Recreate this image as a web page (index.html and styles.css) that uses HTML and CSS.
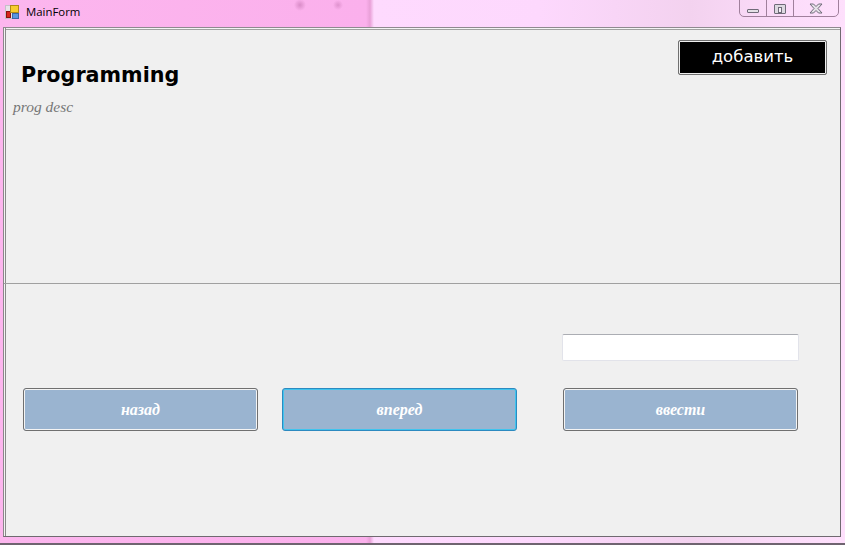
FILE: index.html
```html
<!DOCTYPE html>
<html>
    <head>
        <meta charset="utf-8">
        <title>MainForm</title>
        <link rel="stylesheet" href="styles.css">
    </head>
    <body>
        <div class="window">
            <div class="titlebar">
                <svg class="app_icon" width="14" height="14" viewBox="0 0 14 14">
                    <rect x="0.5" y="0.5" width="13" height="13" fill="#e8e4e8" stroke="#c4c0c8"/>
                    <rect x="1.5" y="6.5" width="4" height="6" fill="#d8261c" stroke="#8a1410"/>
                    <rect x="5.5" y="0.5" width="8" height="7" fill="#f8cc30" stroke="#b08a18"/>
                    <rect x="7.5" y="8.5" width="6" height="5" fill="#5a96e0" stroke="#3a66a8"/>
                </svg>
                <span class="app_title">MainForm</span>
                <div class="win_buttons">
                    <div class="win_btn min"><div class="min_icon"></div></div>
                    <div class="win_btn max"><div class="max_icon"></div></div>
                    <div class="win_btn close">
                        <svg width="14" height="11" viewBox="0 0 14 11">
                            <path d="M1 1h3.500L7 3.500 9.500 1H13L9 5.500 13 10H9.500L7 7.500 4.500 10H1L5 5.500z" fill="#e6e2e8" stroke="#6f6a78"/>
                        </svg>
                    </div>
                </div>
            </div>

            <div class="form">
                <div class="top_panel">
                    <div class="heading">
                        <div class="prog_title">Programming</div>
                        <div class="prog_desc">prog desc</div>
                    </div>
                    <div class="add_btn">добавить</div>
                </div>

                <div class="bottom_panel">
                    <div class="input_row">
                        <div class="text_input"></div>
                    </div>
                    <div class="button_row">
                        <div class="nav_btn back">назад</div>
                        <div class="nav_btn next">вперед</div>
                        <div class="nav_btn enter">ввести</div>
                    </div>
                </div>
            </div>
        </div>
    </body>
</html>
```

FILE: styles.css
```css
*{
    box-sizing: border-box;
}

html,
body{
    margin: 0;
    height: 100%;
    overflow: hidden;
}

.window{
    width: 845px;
    height: 545px;
    display: flex;
    flex-direction: column;
    background:
        radial-gradient(circle at 300px 5px, rgba(190, 110, 170, 0.55) 0, rgba(190, 110, 170, 0) 6px),
        radial-gradient(circle at 338px 5px, rgba(190, 110, 170, 0.45) 0, rgba(190, 110, 170, 0) 5px),
        linear-gradient(90deg, #fcb6ee 0, #fbb0ec 366px, #e9a0d8 370px, #fedafe 374px, #fdd8fd 540px, #f3d2ef 690px, #fcdcfa 790px, #fee0fc 845px);
    border-bottom: 2px solid #6f6470;
}

.titlebar{
    height: 26px;
    flex: none;
    display: flex;
    align-items: flex-start;
    padding-left: 5px;
    position: relative;
}

.app_icon{
    margin-top: 5px;
}

.app_title{
    margin-left: 7px;
    margin-top: 4px;
    font-family: "Open Sans", "Noto Sans", sans-serif;
    font-size: 11.400px;
    line-height: 16px;
    color: #000;
}

.win_buttons{
    position: absolute;
    right: 6px;
    top: -1px;
    width: 100px;
    height: 18px;
    display: flex;
    border: 1px solid #a0809c;
    border-radius: 0 0 5px 5px;
}

.win_btn{
    display: flex;
    align-items: center;
    justify-content: center;
    border-right: 1px solid #a0809c;
    padding-top: 1px;
}

.min{
    width: 27px;
    padding-top: 5px;
}

.max{
    width: 27px;
}

.close{
    flex: 1;
    border-right: 0;
}

.min_icon{
    width: 12px;
    height: 4px;
    background: #e4e0e6;
    border: 1px solid #6f6a78;
    border-radius: 1px;
}

.max_icon{
    width: 12px;
    height: 10px;
    background: #dcd8e0;
    border: 1px solid #6f6a78;
    border-radius: 1px;
    padding: 2px 3px;
}

.max_icon::after{
    content: "";
    display: block;
    height: 4px;
    background: #f6f0f8;
    border: 1px solid #6f6a78;
}

.form{
    margin: 1px 4px 6px 3px;
    flex: 1;
    display: flex;
    flex-direction: column;
    background: #f0f0f0;
    border: 1px solid #6f6a70;
    border-left-color: #8a868a;
    border-top-color: #8f8a8f;
    box-shadow: inset 1px 0 0 #f4f4f4, inset 2px 0 0 #8a8a8a, inset 0 1px 0 #f4f4f4, inset 0 2px 0 #a0a0a0;
}

.top_panel{
    height: 256px;
    flex: none;
    display: flex;
    justify-content: space-between;
    align-items: flex-start;
    border-bottom: 1px solid #a0a0a0;
    padding: 12px 13px 0 9px;
}

.prog_title{
    margin-top: 21px;
    margin-left: 8px;
    font-family: "DejaVu Sans", sans-serif;
    font-weight: bold;
    font-size: 20.700px;
    line-height: 28px;
    color: #000;
}

.prog_desc{
    margin-top: 9px;
    font-family: "Liberation Serif", serif;
    font-style: italic;
    font-size: 15.500px;
    line-height: 18px;
    color: #777;
}

.add_btn{
    width: 149px;
    height: 35px;
    background: #000;
    border: 1px solid #707070;
    border-radius: 2px;
    box-shadow: inset 0 0 0 1px #efefef;
    padding: 2px 2px 4px;
    background-clip: padding-box;
    display: flex;
    align-items: center;
    justify-content: center;
    font-family: "DejaVu Sans", sans-serif;
    font-size: 16.500px;
    color: #fff;
}

.bottom_panel{
    flex: 1;
    padding: 50px 0 0 19px;
}

.input_row{
    display: flex;
    justify-content: flex-end;
    padding-right: 41px;
}

.text_input{
    width: 237px;
    height: 27px;
    background: #fff;
    border: 1px solid #e2e3ea;
    border-top-color: #abadb3;
    border-radius: 2px;
}

.button_row{
    margin-top: 27px;
    display: flex;
}

.nav_btn{
    width: 235px;
    height: 43px;
    background: #9ab4d0;
    border: 1px solid #707070;
    border-radius: 3px;
    box-shadow: inset 0 0 0 1px #f4f4f4;
    padding-top: 1px;
    display: flex;
    align-items: center;
    justify-content: center;
    font-family: "Liberation Serif", serif;
    font-style: italic;
    font-weight: bold;
    font-size: 16px;
    color: #fff;
}

.next{
    margin-left: 24px;
    border-color: #2c8ac0;
    box-shadow: inset 0 0 0 1px #40c4ee;
}

.enter{
    margin-left: 46px;
}
```
